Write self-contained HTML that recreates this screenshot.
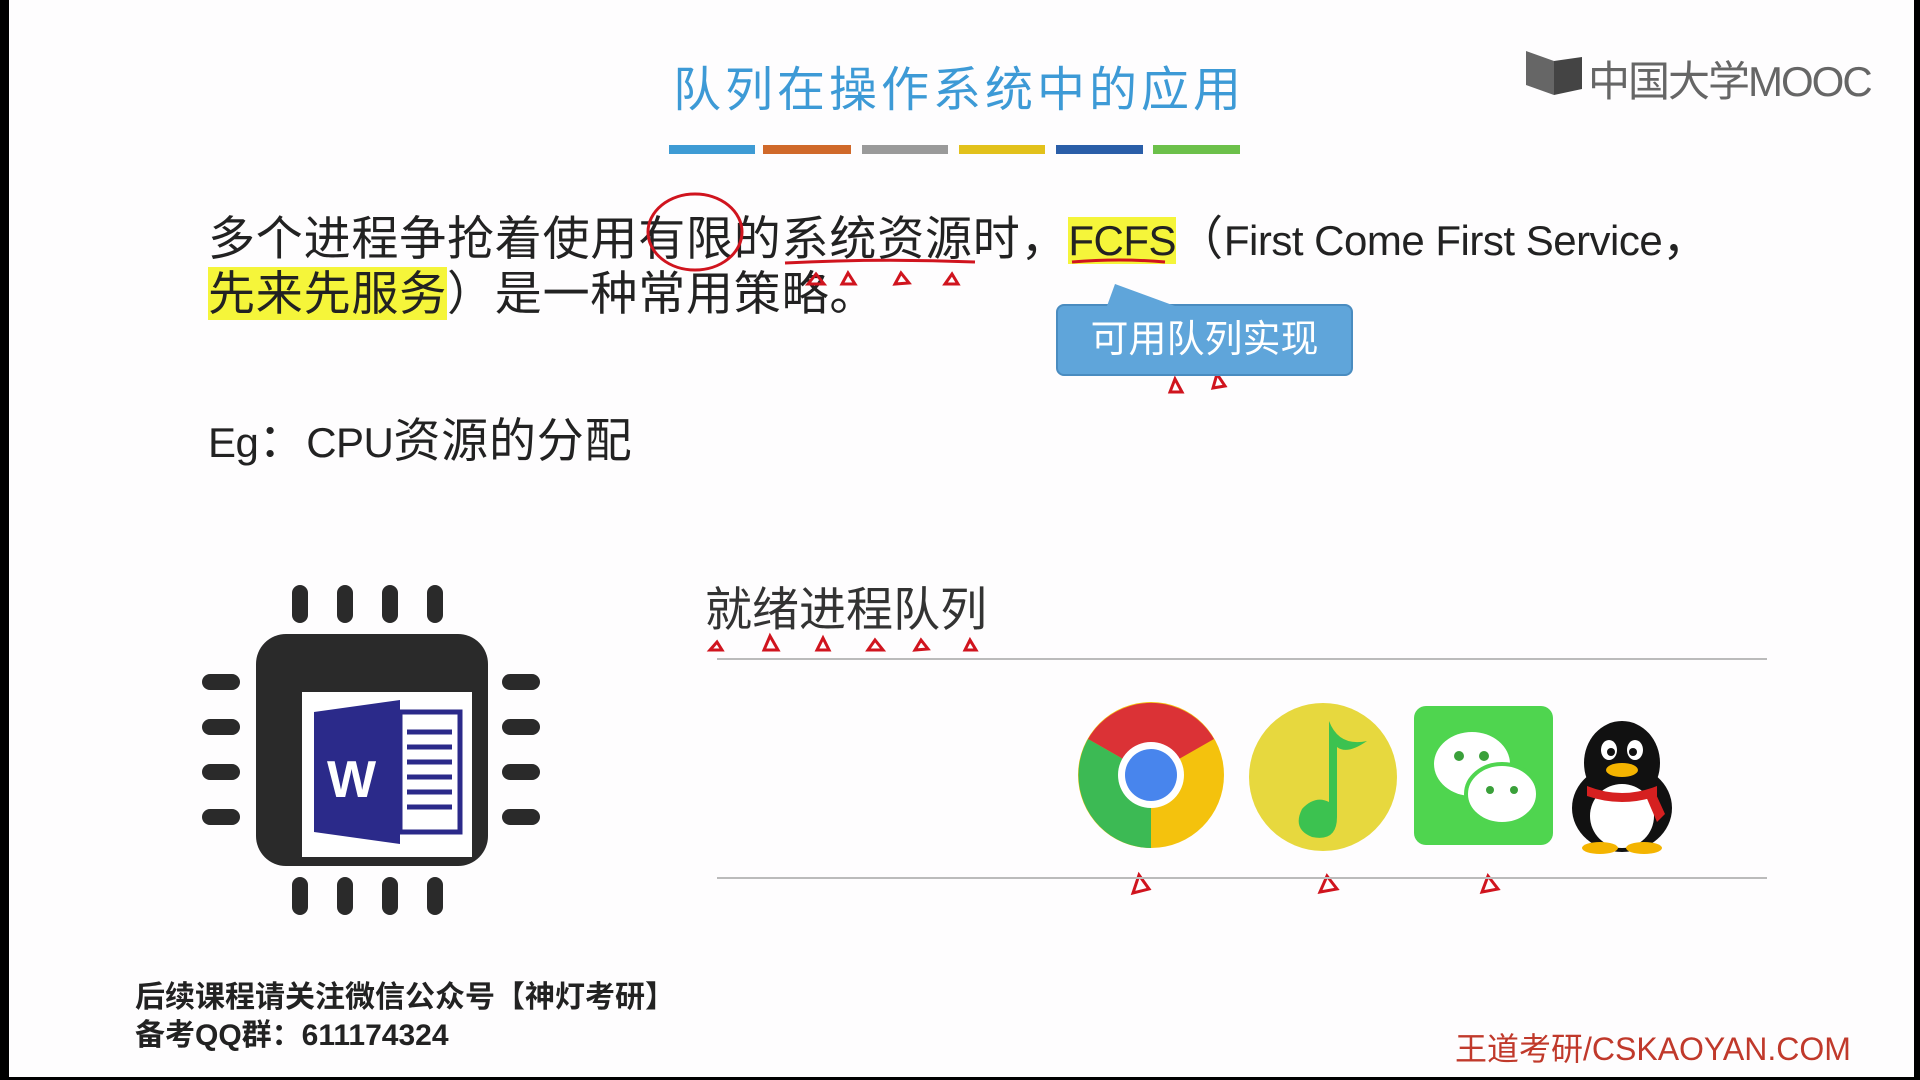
<!DOCTYPE html>
<html><head><meta charset="utf-8"><style>
*{margin:0;padding:0;box-sizing:border-box}
body{width:1920px;height:1080px;background:#000;position:relative;overflow:hidden;font-family:"Liberation Sans","Noto Sans CJK SC",sans-serif}
#s{position:absolute;left:9px;top:0;width:1905px;height:1077px;background:#fefdfe}
.a{position:absolute;white-space:nowrap}
.t{font-size:47px;color:#222;line-height:56px;letter-spacing:0.8px}
.l{font-size:42px;letter-spacing:-0.5px}
.hl{background:#f5f53a}
</style></head><body><div id="s"></div>
<div class="a" style="left:673px;top:50px;font-size:48px;color:#3d9ad6;letter-spacing:4px">队列在操作系统中的应用</div>
<div class="a" style="left:669px;top:145px;width:86px;height:9px;background:#3e9bd4"></div>
<div class="a" style="left:763px;top:145px;width:88px;height:9px;background:#d0692a"></div>
<div class="a" style="left:862px;top:145px;width:86px;height:9px;background:#9a9a9a"></div>
<div class="a" style="left:959px;top:145px;width:86px;height:9px;background:#e2c11b"></div>
<div class="a" style="left:1056px;top:145px;width:87px;height:9px;background:#2a5ea8"></div>
<div class="a" style="left:1153px;top:145px;width:87px;height:9px;background:#6cc04a"></div>
<svg class="a" style="left:1524px;top:49px" width="60" height="50" viewBox="0 0 60 50"><path d="M2 2 L30 12 L30 46 L2 36Z" fill="#666"/><path d="M30 12 L58 8 L58 40 L30 46Z" fill="#444"/></svg>
<div class="a" style="left:1588px;top:48px;font-size:42px;color:#666;letter-spacing:-2px">中国大学MOOC</div>
<div class="a t" style="left:208px;top:211px">多个进程争抢着使用有限的系统资源时，<span class="hl l">FCFS</span>（<span class="l">First Come First Service</span>，</div>
<div class="a t" style="left:208px;top:266px"><span class="hl">先来先服务</span>）是一种常用策略。</div>
<svg class="a" style="left:0;top:0" width="1920" height="1080" fill="none" stroke="#d0141e" stroke-width="3">
<ellipse cx="695" cy="232" rx="47" ry="38"/>
<path d="M785 263 Q880 258 975 262"/>
<path d="M1072 262 Q1120 258 1165 262"/>
<path d="M808 284l8-10 8 10z M842 284l6-11 7 11z M895 284l6-11 8 10z M945 284l7-10 6 10z"/>
<path d="M1170 392l5-13 7 13z M1213 388l4-14 8 12z"/>
<path d="M710 650l7-8 5 8z M764 650l6-14 8 14z M817 650l6-12 6 12z M868 650l7-10 8 10z M915 650l6-10 7 9z M965 650l5-10 6 10z"/>
<path d="M1133 893l6-18 10 14z M1320 892l7-16 10 13z M1482 892l6-16 10 13z"/>
</svg>
<div class="a" style="left:1056px;top:304px;width:297px;height:72px;background:#5fa5da;border:2px solid #4a8cc0;border-radius:8px;color:#fff;font-size:38px;line-height:68px;text-align:center">可用队列实现</div>
<div class="a" style="left:1107px;top:284px;width:0;height:0;border-left:8px solid transparent;border-right:60px solid transparent;border-bottom:22px solid #5fa5da"></div>
<div class="a t" style="left:208px;top:413px"><span class="l">Eg</span>：<span class="l">CPU</span>资源的分配</div>
<svg class="a" style="left:202px;top:582px" width="340" height="336" viewBox="0 0 340 336">
<g fill="#2a2a2a"><rect x="90" y="3" width="16" height="38" rx="8"/><rect x="135" y="3" width="16" height="38" rx="8"/><rect x="180" y="3" width="16" height="38" rx="8"/><rect x="225" y="3" width="16" height="38" rx="8"/>
<rect x="90" y="295" width="16" height="38" rx="8"/><rect x="135" y="295" width="16" height="38" rx="8"/><rect x="180" y="295" width="16" height="38" rx="8"/><rect x="225" y="295" width="16" height="38" rx="8"/>
<rect x="0" y="92" width="38" height="16" rx="8"/><rect x="0" y="137" width="38" height="16" rx="8"/><rect x="0" y="182" width="38" height="16" rx="8"/><rect x="0" y="227" width="38" height="16" rx="8"/>
<rect x="300" y="92" width="38" height="16" rx="8"/><rect x="300" y="137" width="38" height="16" rx="8"/><rect x="300" y="182" width="38" height="16" rx="8"/><rect x="300" y="227" width="38" height="16" rx="8"/>
<rect x="54" y="52" width="232" height="232" rx="30"/></g>
<rect x="100" y="110" width="170" height="165" fill="#fff"/>
<path d="M112 130 L198 118 L198 262 L112 250Z" fill="#2b2a8a"/>
<rect x="198" y="130" width="60" height="120" fill="#fff" stroke="#2b2a8a" stroke-width="5"/>
<g stroke="#2b2a8a" stroke-width="5"><path d="M205 150h45M205 165h45M205 180h45M205 195h45M205 210h45M205 225h45"/></g>
<text x="125" y="215" font-size="52" fill="#fff" font-family="Liberation Sans" font-weight="bold">W</text>
</svg>
<div class="a" style="left:705px;top:571px;font-size:47px;color:#333">就绪进程队列</div>
<div class="a" style="left:717px;top:658px;width:1050px;height:2px;background:#bbb"></div>
<div class="a" style="left:717px;top:877px;width:1050px;height:2px;background:#bbb"></div>
<svg class="a" style="left:1076px;top:700px" width="150" height="150" viewBox="-75 -75 150 150">
<circle r="73" fill="#f4c20d"/>
<path d="M0 0 L-63 -36 A73 73 0 0 1 63 -36Z" fill="#db3236"/>
<path d="M0 0 L-63 -36 A73 73 0 0 0 0 73Z" fill="#3cba54"/>
<circle r="33" fill="#fff"/><circle r="26" fill="#4885ed"/></svg>
<svg class="a" style="left:1247px;top:697px" width="152" height="156" viewBox="0 0 152 156">
<circle cx="76" cy="80" r="74" fill="#e7d83e"/>
<path d="M82 24 Q92 50 120 44 Q100 58 90 50 L90 120 Q90 145 65 140 Q45 132 55 112 Q68 98 82 105Z" fill="#3cc250"/></svg>
<div class="a" style="left:1414px;top:706px;width:139px;height:139px;background:#4fd54f;border-radius:12px"></div>
<svg class="a" style="left:1414px;top:706px" width="139" height="139" viewBox="0 0 139 139">
<ellipse cx="58" cy="58" rx="38" ry="32" fill="#fff"/><ellipse cx="88" cy="88" rx="36" ry="30" fill="#fff" stroke="#4fd54f" stroke-width="4"/>
<circle cx="45" cy="50" r="5" fill="#3aa03a"/><circle cx="70" cy="50" r="5" fill="#3aa03a"/><circle cx="76" cy="84" r="4" fill="#3aa03a"/><circle cx="100" cy="84" r="4" fill="#3aa03a"/></svg>
<svg class="a" style="left:1565px;top:718px" width="115" height="136" viewBox="0 0 115 136">
<ellipse cx="57" cy="90" rx="50" ry="44" fill="#111"/><ellipse cx="57" cy="45" rx="38" ry="42" fill="#111"/>
<ellipse cx="57" cy="98" rx="32" ry="32" fill="#fff"/>
<ellipse cx="44" cy="32" rx="8" ry="10" fill="#fff"/><ellipse cx="70" cy="32" rx="8" ry="10" fill="#fff"/>
<circle cx="46" cy="34" r="4" fill="#111"/><circle cx="68" cy="34" r="4" fill="#111"/>
<ellipse cx="57" cy="52" rx="16" ry="7" fill="#f4b400"/>
<path d="M22 68 Q57 82 92 68 L92 78 Q57 90 22 78Z" fill="#d62020"/><path d="M80 76 L92 104 L100 96 L90 74Z" fill="#d62020"/>
<ellipse cx="35" cy="130" rx="18" ry="6" fill="#f4b400"/><ellipse cx="79" cy="130" rx="18" ry="6" fill="#f4b400"/></svg>
<div class="a" style="left:135px;top:979px;font-size:30px;font-weight:bold;color:#222;line-height:38px">后续课程请关注微信公众号【神灯考研】<br>备考QQ群：611174324</div>
<div class="a" style="left:1455px;top:1024px;font-size:32px;color:#c0392b">王道考研/CSKAOYAN.COM</div>
</body></html>
